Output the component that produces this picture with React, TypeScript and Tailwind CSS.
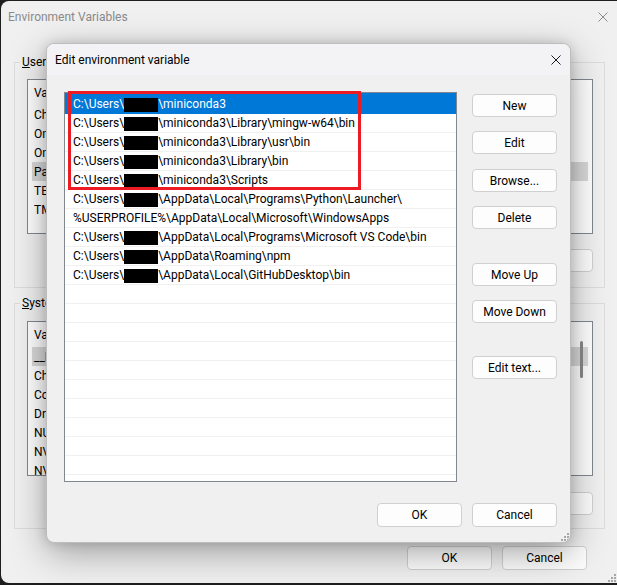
import React from "react";

function XIcon({ color }: { color: string }) {
  return (
    <svg width="10" height="10" viewBox="0 0 10 10" className="block">
      <path d="M0.5 0.5 L9.5 9.5 M9.5 0.5 L0.5 9.5" stroke={color} strokeWidth="1" fill="none" />
    </svg>
  );
}

function Grip() {
  const dots = [
    [6, 0],
    [6, 3],
    [3, 3],
    [6, 6],
    [3, 6],
    [0, 6],
  ];
  return (
    <svg width="8" height="8" viewBox="0 0 8 8" className="block">
      {dots.map(([x, y], i) => (
        <rect key={i} x={x} y={y} width="2" height="2" fill="#a8a8a8" />
      ))}
    </svg>
  );
}

type PathRow = { redact: boolean; rest: string };

const paths: PathRow[] = [
  { redact: true, rest: "\\miniconda3" },
  { redact: true, rest: "\\miniconda3\\Library\\mingw-w64\\bin" },
  { redact: true, rest: "\\miniconda3\\Library\\usr\\bin" },
  { redact: true, rest: "\\miniconda3\\Library\\bin" },
  { redact: true, rest: "\\miniconda3\\Scripts" },
  { redact: true, rest: "\\AppData\\Local\\Programs\\Python\\Launcher\\" },
  { redact: false, rest: "%USERPROFILE%\\AppData\\Local\\Microsoft\\WindowsApps" },
  { redact: true, rest: "\\AppData\\Local\\Programs\\Microsoft VS Code\\bin" },
  { redact: true, rest: "\\AppData\\Roaming\\npm" },
  { redact: true, rest: "\\AppData\\Local\\GitHubDesktop\\bin" },
];

function Btn({ children, className = "" }: { children: React.ReactNode; className?: string }) {
  return (
    <div
      className={`w-[85px] h-[23px] flex items-center justify-center bg-[#fdfdfd] border border-[#d0d0d0] rounded-[4px] text-[12px] text-black ${className}`}
    >
      {children}
    </div>
  );
}

function BgList({
  rows,
  selected,
  scroll,
}: {
  rows: string[];
  selected: number;
  scroll?: boolean;
}) {
  return (
    <div className="relative ml-[12px] w-[566px] h-[155px] border border-[#828790] bg-white overflow-hidden">
      <div className="h-[25px] flex items-center pl-[6px] text-[12px] text-black">
        <span className="w-[190px]">Variable</span>
        <span>Value</span>
      </div>
      {rows.map((r, i) => (
        <div
          key={i}
          className={`h-[19px] mx-[4px] px-[2px] flex items-center text-[12px] text-black whitespace-nowrap ${
            i === selected ? "bg-[#d9d9d9]" : ""
          }`}
        >
          {r}
        </div>
      ))}
      {scroll && (
        <div className="absolute right-[9px] top-[19px] w-[3px] h-[37px] rounded-full bg-[#8a8a8a]" />
      )}
    </div>
  );
}

export default function App() {
  const empty = Array.from({ length: 11 });
  return (
    <div className="relative w-[617px] h-[585px] overflow-hidden bg-[#1e1e1e] font-['Roboto','Noto_Sans',sans-serif] text-[12px]">
      {/* Background window: Environment Variables */}
      <div className="absolute left-px top-px w-[616px] h-[582px] bg-[#f0f0f0] rounded-tl-[8px] rounded-bl-[8px] flex flex-col">
        <div className="h-[31px] shrink-0 flex items-center justify-between pl-[7px] pr-[9px] text-[#8a8a8a]">
          <span>Environment Variables</span>
          <XIcon color="#8a8a8a" />
        </div>
        <div className="pl-[13px]">
          <fieldset className="w-[591px] border border-[#dcdcdc] mt-[22px] pb-[15px]">
            <legend className="ml-[5px] px-[2px] leading-[16px] text-black">
              <span className="underline">U</span>ser variables for user
            </legend>
            <div className="mt-[9px]">
              <BgList
                rows={["ChocolateyLastPathUpdate", "OneDrive", "OneDriveConsumer", "Path", "TEMP", "TMP"]}
                selected={3}
              />
            </div>
            <div className="ml-[12px] w-[566px] mt-[15px] flex justify-end gap-[10px]">
              <Btn>New...</Btn>
              <Btn>Edit...</Btn>
              <Btn>Delete</Btn>
            </div>
          </fieldset>
          <fieldset className="w-[591px] border border-[#dcdcdc] mt-[7px] pb-[13px]">
            <legend className="ml-[5px] px-[2px] leading-[16px] text-black">
              <span className="underline">S</span>ystem variables
            </legend>
            <div className="mt-[10px]">
              <BgList
                rows={[
                  "__IntelliJ",
                  "ChocolateyInstall",
                  "ComSpec",
                  "DriverData",
                  "NUMBER_OF_PROCESSORS",
                  "NVM_HOME",
                  "NVM_SYMLINK",
                ]}
                selected={0}
                scroll
              />
            </div>
            <div className="ml-[12px] w-[566px] mt-[16px] flex justify-end gap-[10px]">
              <Btn>New...</Btn>
              <Btn>Edit...</Btn>
              <Btn>Delete</Btn>
            </div>
          </fieldset>
        </div>
        <div className="mt-[17px] flex justify-end gap-[10px] pr-[30px]">
          <Btn className="h-[24px]">OK</Btn>
          <Btn className="h-[24px]">Cancel</Btn>
        </div>
        <div className="mt-auto flex justify-end pr-[1px] pb-[1px]">
          <Grip />
        </div>
      </div>

      {/* Foreground dialog: Edit environment variable */}
      <div className="absolute left-[46px] top-[43px] w-[525px] h-[500px] rounded-[8px] border border-[#bdbdbd] bg-[#f0f0f0] shadow-[0_10px_36px_rgba(0,0,0,0.34),0_0_12px_rgba(0,0,0,0.14)] flex flex-col overflow-hidden">
        <div className="h-[31px] shrink-0 bg-[#f3f3f5] flex items-center justify-between pl-[8px] pr-[9px] text-black">
          <span>Edit environment variable</span>
          <XIcon color="#1b1b1b" />
        </div>
        <div className="flex pl-[17px] pt-[17px] gap-[15px]">
          <div className="w-[393px] h-[390px] border border-[#828790] bg-white overflow-hidden">
            {paths.map((p, i) => (
              <div
                key={i}
                className={`border-b flex items-center pl-[8px] whitespace-nowrap ${
                  i === 0
                    ? "h-[21px] pt-[1px] bg-[#0078d7] text-white border-[#0078d7]"
                    : "h-[19px] text-black border-[#f0f0f0]"
                }`}
              >
                {p.redact ? (
                  <>
                    <span>C:\Users\</span>
                    <span className="inline-block w-[34px] h-[14px] bg-black mt-[2px]" />
                    <span>{p.rest}</span>
                  </>
                ) : (
                  <span>{p.rest}</span>
                )}
              </div>
            ))}
            {empty.map((_, i) => (
              <div key={`e${i}`} className="h-[19px] border-b border-[#f0f0f0]" />
            ))}
          </div>
          <div className="flex flex-col pt-[2px]">
            <Btn>New</Btn>
            <Btn className="mt-[14px]">Edit</Btn>
            <Btn className="mt-[15px]">Browse...</Btn>
            <Btn className="mt-[14px]">Delete</Btn>
            <Btn className="mt-[34px]">Move Up</Btn>
            <Btn className="mt-[14px]">Move Down</Btn>
            <Btn className="mt-[33px]">Edit text...</Btn>
          </div>
        </div>
        <div className="mt-[21px] flex justify-end gap-[10px] pr-[13px]">
          <Btn className="h-[24px] border-[#0067c0]">OK</Btn>
          <Btn className="h-[24px]">Cancel</Btn>
        </div>
        <div className="mt-auto flex justify-end pr-[1px] pb-[1px]">
          <Grip />
        </div>
        {/* red annotation rectangle */}
        <div className="absolute left-[21px] top-[47px] w-[293px] h-[99px] border-[3px] border-[#ed1c24]" />
      </div>
    </div>
  );
}
